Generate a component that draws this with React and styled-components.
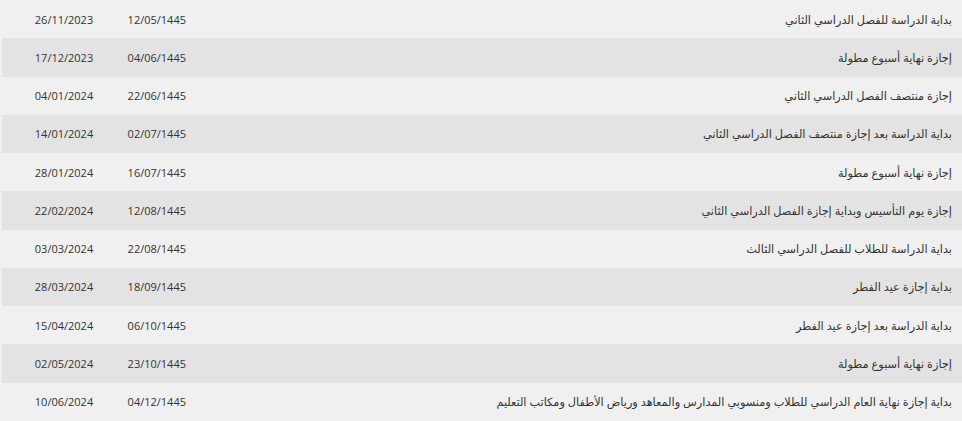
import React from 'react'
import styled, { createGlobalStyle } from 'styled-components'

const rows = [
   ['بداية الدراسة للفصل الدراسي الثاني', '12/05/1445', '26/11/2023'],
   ['إجازة نهاية أسبوع مطولة', '04/06/1445', '17/12/2023'],
   ['إجازة منتصف الفصل الدراسي الثاني', '22/06/1445', '04/01/2024'],
   ['بداية الدراسة بعد إجازة منتصف الفصل الدراسي الثاني', '02/07/1445', '14/01/2024'],
   ['إجازة نهاية أسبوع مطولة', '16/07/1445', '28/01/2024'],
   ['إجازة يوم التأسيس وبداية إجازة الفصل الدراسي الثاني', '12/08/1445', '22/02/2024'],
   ['بداية الدراسة للطلاب للفصل الدراسي الثالث', '22/08/1445', '03/03/2024'],
   ['بداية إجازة عيد الفطر', '18/09/1445', '28/03/2024'],
   ['بداية الدراسة بعد إجازة عيد الفطر', '06/10/1445', '15/04/2024'],
   ['إجازة نهاية أسبوع مطولة', '23/10/1445', '02/05/2024'],
   ['بداية إجازة نهاية العام الدراسي للطلاب ومنسوبي المدارس والمعاهد ورياض الأطفال ومكاتب التعليم', '04/12/1445', '10/06/2024'],
]

const GlobalStyle = createGlobalStyle`
   html, body {
      margin: 0;
      padding: 0;
      background: #f0f0f0;
      overflow: hidden;
   }
`

function App() {
   return (
      <>
         <GlobalStyle />
         <Table>
            {rows.map(([event, hijri, greg], i) => (
               <Row key={i} striped={i % 2 === 1}>
                  <EventCell>{event}</EventCell>
                  <DateCell>{hijri}</DateCell>
                  <GregCell>{greg}</GregCell>
               </Row>
            ))}
         </Table>
      </>
   )
}

export default App

const Table = styled.div`
   margin-left: 2px;
   width: 960px;
   direction: rtl;
   font-family: 'Open Sans', 'DejaVu Sans', sans-serif;
   color: #333;
`
const Row = styled.div`
   display: grid;
   grid-template-columns: 1fr 70px 124px;
   align-items: center;
   height: 38.27px;
   background: ${({ striped }) => (striped ? '#e3e3e3' : '#f0f0f0')};
`
const EventCell = styled.div`
   padding-right: 10px;
   font-size: 11.3px;
   text-align: right;
`
const DateCell = styled.div`
   font-size: 11px;
   text-align: right;
   direction: ltr;
   padding-right: 10px;
`
const GregCell = styled.div`
   font-size: 11px;
   text-align: center;
   direction: ltr;
`
